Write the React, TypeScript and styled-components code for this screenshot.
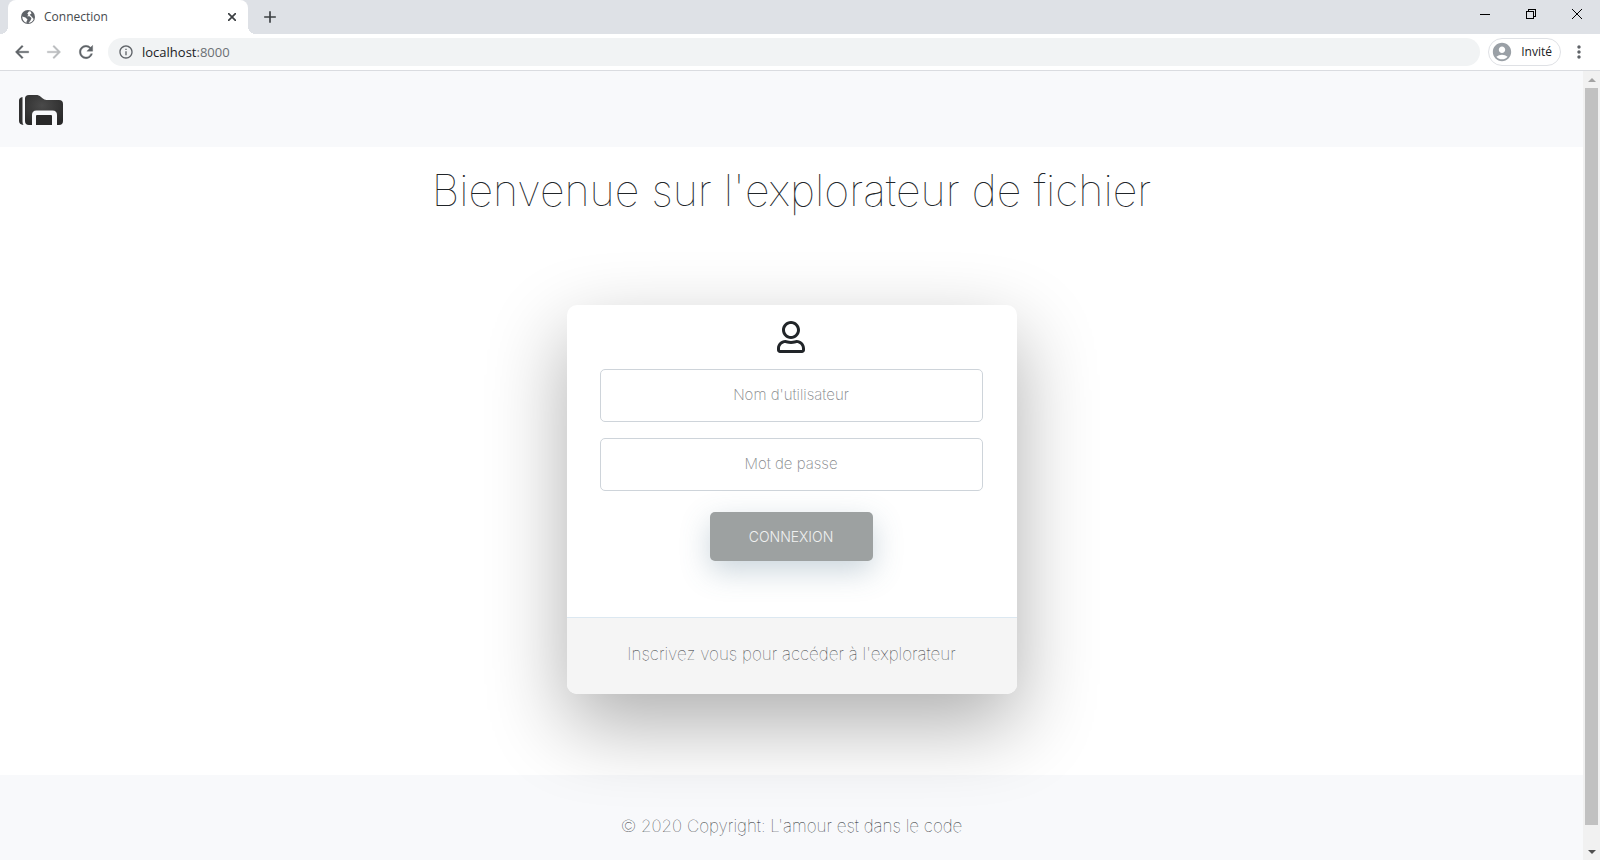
import React from 'react';
import styled, { createGlobalStyle } from 'styled-components';
import { FaRegUser } from 'react-icons/fa';
import { MdArrowBack, MdArrowForward, MdRefresh, MdInfoOutline, MdAccountCircle, MdMoreVert, MdAdd } from 'react-icons/md';

const GlobalStyle = createGlobalStyle`
  *, *::before, *::after { box-sizing: border-box; }
  body { margin: 0; background: #fff; color: #212529; font-family: Inter, "Liberation Sans", sans-serif; font-weight: 100; }
  button { border: 0; padding: 0; background: none; color: inherit; font: inherit; }
`;

const Window = styled.div`
  display: flex;
  flex-direction: column;
  min-height: 100vh;
`;

const TabStrip = styled.div`
  display: flex;
  height: 34px;
  padding-left: 8px;
  background: #dee1e6;
  font: 400 12px/16px "Open Sans", sans-serif;
`;

const Tab = styled.div`
  position: relative;
  display: flex;
  align-items: center;
  width: 240px;
  padding: 0 9px 0 12px;
  border-radius: 8px 8px 0 0;
  background: #fff;
  color: #45494d;

  &::before, &::after {
    content: "";
    position: absolute;
    bottom: 0;
    width: 8px;
    height: 8px;
  }
  &::before { left: -8px; background: radial-gradient(circle at 0 0, transparent 8px, #fff 8px); }
  &::after { right: -8px; background: radial-gradient(circle at 100% 0, transparent 8px, #fff 8px); }
`;

const TabTitle = styled.span`
  flex: 1;
  margin-left: 8px;
`;

const IconButton = styled.button<{ $size: number; $muted?: boolean }>`
  display: flex;
  align-items: center;
  justify-content: center;
  width: ${p => p.$size}px;
  height: ${p => p.$size}px;
  color: ${p => (p.$muted ? '#babcbe' : '#5f6368')};
`;

const ToolIcon = styled(IconButton)`
  path:not([fill="none"]) { stroke: currentColor; stroke-width: 0.4px; }
`;

const NewTab = styled(IconButton)`
  margin: 7px 0 0 12px;
  color: #3c4043;
`;

const WindowControls = styled.div`
  display: flex;
  margin-left: auto;
`;

const WindowControl = styled.button`
  display: flex;
  align-items: center;
  justify-content: center;
  width: 46px;
  height: 28px;
`;

const Toolbar = styled.div`
  display: flex;
  align-items: center;
  height: 37px;
  padding: 0 11px 0 12px;
  border-bottom: 1px solid #dadce0;
`;

const NavButtons = styled.div`
  display: flex;
  gap: 12px;
  margin-right: 12px;
`;

const AddressBar = styled.div`
  display: flex;
  flex: 1;
  align-items: center;
  gap: 8px;
  height: 28px;
  padding: 0 10px;
  border-radius: 14px;
  background: #f1f3f4;
  color: #5f6368;
`;

const Url = styled.a`
  color: #6b6f73;
  font: 400 13px/20px "Open Sans", sans-serif;
  text-decoration: none;
  b { color: #202124; font-weight: 400; }
`;

const Profile = styled.button`
  display: flex;
  align-items: center;
  gap: 8px;
  height: 28px;
  margin: 0 8px;
  padding: 0 8px 0 2px;
  border: 1px solid #dfe1e5;
  border-radius: 14px;
  color: #202124;
  font: 400 12px/20px "Open Sans", sans-serif;
  svg { color: #9aa0a6; }
`;

const Viewport = styled.div`
  display: flex;
  flex: 1;
`;

const Page = styled.div`
  display: flex;
  flex: 1;
  flex-direction: column;
  min-width: 0;
`;

const Header = styled.header`
  display: flex;
  align-items: center;
  height: 76px;
  padding: 2px 18px 0;
  background: #f8f9fb;
`;

const Main = styled.main`
  display: flex;
  flex: 1;
  flex-direction: column;
  align-items: center;
  padding: 19px 20px 81px;
`;

const Title = styled.h1`
  margin: 0 0 91px;
  font-size: 43px;
  font-weight: 100;
  line-height: 48px;
  text-align: center;
`;

const Card = styled.section`
  position: relative;
  z-index: 1;
  width: 100%;
  max-width: 450px;
  border-radius: 10px;
  background: #fff;
  box-shadow: 0 30px 80px 0 rgba(0, 0, 0, 0.32);
`;

const Form = styled.form`
  display: flex;
  flex-direction: column;
  align-items: center;
  gap: 16px;
  padding: 16px 34px 56px 33px;
`;

const Field = styled.input`
  width: 100%;
  height: 53px;
  padding: 0 32px 2px;
  border: 1px solid #ced4da;
  border-radius: 5px;
  background: #fff;
  color: #0d0d0d;
  font: 200 15px/24px Inter, sans-serif;
  text-align: center;
  &::placeholder { color: #85888b; opacity: 1; }
`;

const Submit = styled.button`
  width: 163px;
  height: 49px;
  margin-top: 5px;
  border-radius: 5px;
  background: #9da1a1;
  box-shadow: 0 10px 30px 0 rgba(80, 115, 140, 0.3);
  color: #f0f1f1;
  font: 300 14px/20px Inter, sans-serif;
  text-transform: uppercase;
`;

const CardFooter = styled.div`
  padding: 22px 24px 26px;
  border-top: 1px solid #dce8f1;
  border-radius: 0 0 10px 10px;
  background: #f5f5f5;
  text-align: center;
  line-height: 28px;
`;

const SignUp = styled.a`
  color: #303336;
  font-size: 17px;
  text-decoration: none;
`;

const Footer = styled.footer`
  padding: 39px 20px 22px;
  background: #f8f9fb;
  font-size: 17px;
  line-height: 24px;
  text-align: center;
`;

const Scrollbar = styled.div`
  display: flex;
  flex-direction: column;
  width: 17px;
  padding: 0 2px;
  background: #f1f1f1;
`;

const ScrollArrow = styled.button`
  display: flex;
  align-items: center;
  justify-content: center;
  height: 17px;
`;

const Track = styled.div`
  display: flex;
  flex: 1;
  padding-bottom: 18px;
`;

const Thumb = styled.div`
  flex: 1;
  background: #c1c1c1;
`;

const Globe = () => (
  <svg width="16" height="16" viewBox="0 0 16 16" aria-hidden="true">
    <circle cx="8" cy="8" r="7" fill="#5f6368" />
    <path d="M9 2.300L7.300 4.600L8.500 6L7 7.200H9.500L11.500 9L10.500 11.500L8.500 14Q12.500 13.500 13.700 10L11.500 7.500L9.700 5.800L11.500 4.600L10.700 2.600ZM2.200 7.500L5.500 8.500L7.500 10.500L6.500 12.500V13.800Q2.500 12.500 2.200 7.500Z" fill="#fff" />
  </svg>
);

const FolderLogo = () => (
  <svg width="46" height="32" viewBox="0 0 46 32" role="img" aria-label="Explorateur">
    <defs>
      <radialGradient id="folder" cx="45%" cy="35%" r="70%">
        <stop offset="0" stopColor="#4a4a4a" />
        <stop offset="1" stopColor="#292929" />
      </radialGradient>
    </defs>
    <path d="M4.500 3Q1 3.500 1 6.500V27Q1 30.500 5.500 31Q4.500 29.500 4.500 27.500Z" fill="#303030" />
    <path d="M11 1H18C20 1 21.500 1.500 23 3L24.500 4.300Q26.300 6 28.500 6H41Q45 6 45 10V27Q45 31 41 31H39V21Q39 16.500 34.500 16.500H18.500Q14 16.500 14 21V31H11Q7 31 7 27V4.500Q7 1 11 1Z" fill="url(#folder)" />
    <path d="M18 22Q18 21 19 21H33Q34 21 34 22V31H18Z" fill="#292929" />
  </svg>
);

export default function App() {
  return (
    <Window>
      <GlobalStyle />
      <TabStrip>
        <Tab>
          <Globe />
          <TabTitle>Connection</TabTitle>
          <IconButton $size={14} aria-label="Fermer l'onglet">
            <svg width="8" height="8" stroke="#3c4043" strokeWidth="1.7"><path d="M0 0L8 8M8 0L0 8" /></svg>
          </IconButton>
        </Tab>
        <NewTab $size={20} aria-label="Nouvel onglet"><MdAdd size={20} /></NewTab>
        <WindowControls>
          <WindowControl aria-label="Réduire">
            <svg width="10" height="10" shapeRendering="crispEdges"><path d="M0 5.500H10" stroke="#000" /></svg>
          </WindowControl>
          <WindowControl aria-label="Restaurer">
            <svg width="10" height="10" shapeRendering="crispEdges" fill="none" stroke="#000"><path d="M.5 2.500H7.500V9.500H.5ZM2.500 2.500V.5H9.500V7.500H7.500" /></svg>
          </WindowControl>
          <WindowControl aria-label="Fermer">
            <svg width="10" height="10" stroke="#000"><path d="M0 0L10 10M10 0L0 10" /></svg>
          </WindowControl>
        </WindowControls>
      </TabStrip>
      <Toolbar>
        <NavButtons>
          <ToolIcon $size={20} aria-label="Précédent"><MdArrowBack size={20} /></ToolIcon>
          <ToolIcon $size={20} $muted aria-label="Suivant"><MdArrowForward size={20} /></ToolIcon>
          <ToolIcon $size={20} aria-label="Actualiser"><MdRefresh size={20} /></ToolIcon>
        </NavButtons>
        <AddressBar>
          <MdInfoOutline size={16} />
          <Url href="#"><b>localhost</b>:8000</Url>
        </AddressBar>
        <Profile><MdAccountCircle size={22} />Invité</Profile>
        <IconButton $size={20} aria-label="Menu"><MdMoreVert size={20} /></IconButton>
      </Toolbar>
      <Viewport>
        <Page>
          <Header><FolderLogo /></Header>
          <Main>
            <Title>Bienvenue sur l'explorateur de fichier</Title>
            <Card>
              <Form onSubmit={e => e.preventDefault()}>
                <FaRegUser size={32} />
                <Field type="text" aria-label="Nom d'utilisateur" placeholder="Nom d'utilisateur" />
                <Field type="password" aria-label="Mot de passe" placeholder="Mot de passe" />
                <Submit type="submit">Connexion</Submit>
              </Form>
              <CardFooter><SignUp href="#">Inscrivez vous pour accéder à l'explorateur</SignUp></CardFooter>
            </Card>
          </Main>
          <Footer>© 2020 Copyright: L'amour est dans le code</Footer>
        </Page>
        <Scrollbar>
          <ScrollArrow aria-label="Défiler vers le haut">
            <svg width="8" height="4"><path d="M0 4L4 0L8 4Z" fill="#a3a3a3" /></svg>
          </ScrollArrow>
          <Track><Thumb /></Track>
          <ScrollArrow aria-label="Défiler vers le bas">
            <svg width="8" height="4"><path d="M0 0L4 4L8 0Z" fill="#505050" /></svg>
          </ScrollArrow>
        </Scrollbar>
      </Viewport>
    </Window>
  );
}
